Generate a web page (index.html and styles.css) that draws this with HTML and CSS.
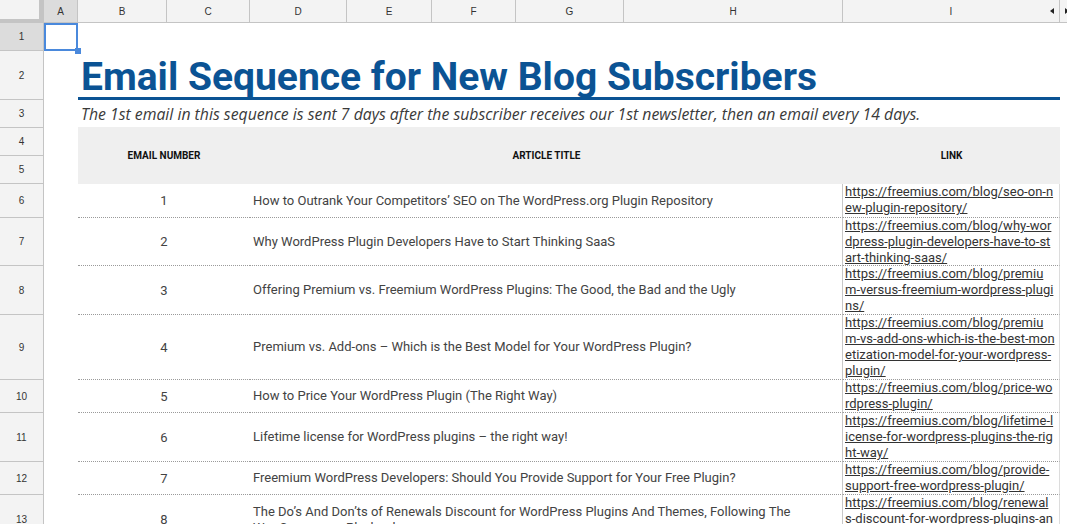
FILE: index.html
```html
<!DOCTYPE html>
<html lang="en">
<head>
<meta charset="utf-8">
<title>Email Sequence for New Blog Subscribers</title>
<link rel="stylesheet" href="styles.css">
</head>
<body>
<div class="sheet">
  <div class="ch corner"></div>
  <div class="ch sel">A</div>
  <div class="ch">B</div>
  <div class="ch">C</div>
  <div class="ch">D</div>
  <div class="ch">E</div>
  <div class="ch">F</div>
  <div class="ch">G</div>
  <div class="ch">H</div>
  <div class="ch col-i">I<span class="arrow-left"></span></div>
  <div class="ch rest"><span class="arrow-right"></span></div>

  <div class="rh sel">1</div>
  <div class="a1"><span class="selbox"><span class="handle"></span></span></div>

  <div class="rh">2</div>
  <div class="title">Email Sequence for New Blog Subscribers</div>

  <div class="rh">3</div>
  <div class="sub">The 1st email in this sequence is sent 7 days after the subscriber receives our 1st newsletter, then an email every 14 days.</div>

  <div class="rh">4</div>
  <div class="th th-num">EMAIL NUMBER</div>
  <div class="th th-ttl">ARTICLE TITLE</div>
  <div class="th th-lnk">LINK</div>

  <div class="rh">5</div>

  <div class="rh">6</div>
  <div class="num">1</div>
  <div class="ttl">How to Outrank Your Competitors’ SEO on The WordPress.org Plugin Repository</div>
  <div class="lnk"><a href="#"><span>https://freemius.com/blog/seo-on-n</span><span>ew-plugin-repository/</span></a></div>

  <div class="rh">7</div>
  <div class="num">2</div>
  <div class="ttl">Why WordPress Plugin Developers Have to Start Thinking SaaS</div>
  <div class="lnk"><a href="#"><span>https://freemius.com/blog/why-wor</span><span>dpress-plugin-developers-have-to-st</span><span>art-thinking-saas/</span></a></div>

  <div class="rh">8</div>
  <div class="num">3</div>
  <div class="ttl">Offering Premium vs. Freemium WordPress Plugins: The Good, the Bad and the Ugly</div>
  <div class="lnk"><a href="#"><span>https://freemius.com/blog/premiu</span><span>m-versus-freemium-wordpress-plugi</span><span>ns/</span></a></div>

  <div class="rh">9</div>
  <div class="num">4</div>
  <div class="ttl">Premium vs. Add-ons – Which is the Best Model for Your WordPress Plugin?</div>
  <div class="lnk"><a href="#"><span>https://freemius.com/blog/premiu</span><span>m-vs-add-ons-which-is-the-best-mon</span><span>etization-model-for-your-wordpress-</span><span>plugin/</span></a></div>

  <div class="rh">10</div>
  <div class="num">5</div>
  <div class="ttl">How to Price Your WordPress Plugin (The Right Way)</div>
  <div class="lnk"><a href="#"><span>https://freemius.com/blog/price-wo</span><span>rdpress-plugin/</span></a></div>

  <div class="rh">11</div>
  <div class="num">6</div>
  <div class="ttl">Lifetime license for WordPress plugins – the right way!</div>
  <div class="lnk"><a href="#"><span>https://freemius.com/blog/lifetime-l</span><span>icense-for-wordpress-plugins-the-rig</span><span>ht-way/</span></a></div>

  <div class="rh">12</div>
  <div class="num">7</div>
  <div class="ttl">Freemium WordPress Developers: Should You Provide Support for Your Free Plugin?</div>
  <div class="lnk"><a href="#"><span>https://freemius.com/blog/provide-</span><span>support-free-wordpress-plugin/</span></a></div>

  <div class="rh">13</div>
  <div class="num">8</div>
  <div class="ttl">The Do’s And Don’ts of Renewals Discount for WordPress Plugins And Themes, Following The WooCommerce Playbook</div>
  <div class="lnk"><a href="#"><span>https://freemius.com/blog/renewal</span><span>s-discount-for-wordpress-plugins-an</span><span>d-themes/</span></a></div>
</div>
</body>
</html>
```

FILE: styles.css
```css
* { box-sizing: border-box; }

html, body {
  margin: 0;
  height: 100%;
  overflow: hidden;
  background: #ffffff;
}

.sheet {
  display: grid;
  grid-template-columns: 44px 34px 89px 83px 97px 85px 84px 108px 219px 217px 1fr;
  grid-template-rows: 23px 28px 49px 28px 28px 28px 34px 48px 49px 65px 33px 49px 33px 50px;
  font-family: Roboto, "Liberation Sans", sans-serif;
}

/* column headers */
.ch {
  grid-row: 1;
  background: #f3f3f3;
  border-right: 1px solid #c4c4c4;
  border-bottom: 1px solid #c4c4c4;
  display: flex;
  align-items: center;
  justify-content: center;
  font: 10px "Liberation Sans", Arial, sans-serif;
  color: #333;
}

.ch.sel { background: #dcdcdc; }

.corner {
  border-right: 5px solid #c4c4c4;
  border-bottom: 4px solid #c4c4c4;
}

.col-i { position: relative; }

.rest {
  border-right: none;
  justify-content: flex-start;
}

.arrow-left {
  position: absolute;
  right: 5px;
  top: 8px;
  width: 0;
  height: 0;
  border-top: 3px solid transparent;
  border-bottom: 3px solid transparent;
  border-right: 4px solid #222;
}

.arrow-right {
  margin-left: 5px;
  width: 0;
  height: 0;
  border-top: 3px solid transparent;
  border-bottom: 3px solid transparent;
  border-left: 4px solid #222;
}

/* row headers */
.rh {
  grid-column: 1;
  background: #f3f3f3;
  border-right: 1px solid #c4c4c4;
  border-bottom: 1px solid #c4c4c4;
  display: flex;
  align-items: center;
  justify-content: center;
  font: 10px "Liberation Sans", Arial, sans-serif;
  color: #333;
}

.rh.sel { background: #dcdcdc; }

/* selected cell A1 */
.a1 {
  grid-column: 2;
  position: relative;
}

.selbox {
  position: absolute;
  inset: 0 0 0 0;
  border: 2px solid #4a89dc;
}

.handle {
  position: absolute;
  right: -5px;
  bottom: -5px;
  width: 6px;
  height: 6px;
  background: #4a89dc;
}

/* title rows */
.title {
  grid-column: 3 / 11;
  display: flex;
  align-items: flex-end;
  padding-left: 3px;
  border-bottom: 3px solid #0b5394;
  color: #0b5394;
  font-family: Roboto, sans-serif;
  font-weight: 700;
  font-size: 39px;
  line-height: 1;
  white-space: nowrap;
}

.sub {
  grid-column: 3 / 11;
  display: flex;
  align-items: center;
  padding-left: 3px;
  color: #3a3a3a;
  font-family: "Open Sans", sans-serif;
  font-style: italic;
  font-size: 15.8px;
  white-space: nowrap;
}

/* table header */
.th {
  grid-row: span 2;
  margin-top: -1px;
  background: #efefef;
  display: flex;
  align-items: center;
  justify-content: center;
  font-family: Roboto, sans-serif;
  font-weight: 700;
  font-size: 10px;
  color: #111;
}

.th-num { grid-column: 3 / 5; }
.th-ttl { grid-column: 5 / 10; }
.th-lnk { grid-column: 10 / 11; }

/* data rows */
.num, .ttl, .lnk {
  border-bottom: 1px dotted #9a9a9a;
  font-size: 13px;
  color: #434343;
}

.num {
  grid-column: 3 / 5;
  display: flex;
  align-items: center;
  justify-content: center;
}

.ttl {
  grid-column: 5 / 10;
  display: flex;
  align-items: center;
  padding-left: 3px;
  padding-right: 40px;
  line-height: 16px;
  border-right: 1px solid #c8c8c8;
}

.lnk {
  grid-column: 10 / 11;
  padding: 0 2px 0 2px;
  line-height: 16px;
  border-right: 1px solid #dcdcdc;
  white-space: nowrap;
  overflow: hidden;
}

.lnk a {
  display: block;
  color: #333;
  text-decoration: underline;
}

.lnk a span {
  display: block;
}
```
